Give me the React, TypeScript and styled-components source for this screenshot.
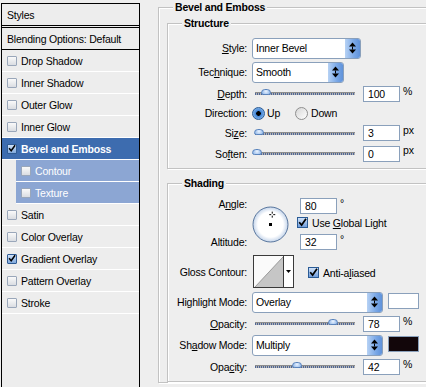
import React from 'react';
import styled, {createGlobalStyle} from 'styled-components';

type StyleItem = {
    name: string
    checked?: boolean
    selected?: boolean
    child?: boolean
}

const styleItems: StyleItem[] = [
    {name: 'Drop Shadow'},
    {name: 'Inner Shadow'},
    {name: 'Outer Glow'},
    {name: 'Inner Glow'},
    {name: 'Bevel and Emboss', checked: true, selected: true},
    {name: 'Contour', child: true},
    {name: 'Texture', child: true},
    {name: 'Satin'},
    {name: 'Color Overlay'},
    {name: 'Gradient Overlay', checked: true},
    {name: 'Pattern Overlay'},
    {name: 'Stroke'},
]

const GlobalStyle = createGlobalStyle`
  body {
    margin: 0;
    background: #eeeeee;
  }
  * {
    box-sizing: border-box;
  }
`

const CheckMark = () => (
    <svg width="9" height="9" viewBox="0 0 9 9">
        <path d="M1.2 4.2 L3.6 7 L8 0.8" fill="none" stroke="#000" strokeWidth="1.7"/>
    </svg>
)

const SpinArrows = () => (
    <svg width="7" height="12" viewBox="0 0 7 12">
        <polygon points="3.5,0.5 7,4.5 0,4.5" fill="#000"/>
        <rect x="3" y="4.5" width="1" height="3" fill="#000"/>
        <polygon points="0,7.5 7,7.5 3.5,11.5" fill="#000"/>
    </svg>
)

// angle dial, crosshair sits at 80 degrees
const AngleDial = ({angle}: {angle: number}) => {
    const rad = angle * Math.PI / 180
    const cx = 18.5 + 10 * Math.cos(rad)
    const cy = 18.5 - 10 * Math.sin(rad)
    return (
        <svg width="37" height="37" viewBox="0 0 37 37">
            <defs>
                <radialGradient id="dialFill" cx="50%" cy="50%" r="50%">
                    <stop offset="0.72" stopColor="#ffffff"/>
                    <stop offset="1" stopColor="#c4d4ea"/>
                </radialGradient>
            </defs>
            <circle cx="18.5" cy="18.5" r="17.5" fill="url(#dialFill)" stroke="#5a779e" strokeWidth="1"/>
            <rect x="17" y="17" width="3" height="3" fill="#000"/>
            <g stroke="#000" strokeWidth="1">
                <line x1={cx - 3} y1={cy} x2={cx - 1} y2={cy}/>
                <line x1={cx + 1} y1={cy} x2={cx + 3} y2={cy}/>
                <line x1={cx} y1={cy - 3} x2={cx} y2={cy - 1}/>
                <line x1={cx} y1={cy + 1} x2={cx} y2={cy + 3}/>
            </g>
        </svg>
    )
}

export default function App() {
    return (
        <>
            <GlobalStyle/>
            <Dialog>
                <StylesList>
                    <ListHeader>Styles</ListHeader>
                    <ListBlending>Blending Options: Default</ListBlending>
                    {styleItems.map(item => (
                        <ListRow key={item.name} $selected={item.selected} $child={item.child}>
                            <ListCheck $checked={item.checked}>{item.checked && <CheckMark/>}</ListCheck>
                            {item.name}
                        </ListRow>
                    ))}
                </StylesList>

                <Settings>
                    <Group $width={300} $padLeft={8}>
                        <Legend $indent={6}>Bevel and Emboss</Legend>

                        <Group $width={290} $padLeft={0}>
                            <Legend $indent={14}>Structure</Legend>
                            <Form $top={4} $bottom={4}>
                                <Label><U>S</U>tyle:</Label>
                                <Control $h={24}>
                                    <Select $w={109}><SelectText>Inner Bevel</SelectText><Spin><SpinArrows/></Spin></Select>
                                </Control>

                                <Label>Tec<U>h</U>nique:</Label>
                                <Control $h={24}>
                                    <Select $w={92}><SelectText>Smooth</SelectText><Spin><SpinArrows/></Spin></Select>
                                </Control>

                                <Label><U>D</U>epth:</Label>
                                <Control $h={19}>
                                    <Track><Thumb style={{left: 11}}/></Track>
                                    <ValueBox>100</ValueBox>
                                    <Unit>%</Unit>
                                </Control>

                                <Label>Direction:</Label>
                                <Control $h={20}>
                                    <Radio $checked/>
                                    <RadioText>Up</RadioText>
                                    <Radio $gap={15}/>
                                    <RadioText $gap={3}>Down</RadioText>
                                </Control>

                                <Label>Si<U>z</U>e:</Label>
                                <Control $h={20}>
                                    <Track><Thumb style={{left: 4}}/></Track>
                                    <ValueBox>3</ValueBox>
                                    <Unit>px</Unit>
                                </Control>

                                <Label>So<U>f</U>ten:</Label>
                                <Control $h={21}>
                                    <Track><Thumb style={{left: 2}}/></Track>
                                    <ValueBox>0</ValueBox>
                                    <Unit>px</Unit>
                                </Control>
                            </Form>
                        </Group>

                        <Group $width={290} $padLeft={0} $gapTop={7}>
                            <Legend $indent={14}>Shading</Legend>
                            <Form $top={4} $bottom={5}>
                                <StackedLabels>
                                    <span>A<U>n</U>gle:</span>
                                    <span>Altitude:</span>
                                </StackedLabels>
                                <Control $h={57}>
                                    <AngleDial angle={80}/>
                                    <AngleColumn>
                                        <AngleLine>
                                            <SmallBox>80</SmallBox>
                                            <Degree>°</Degree>
                                        </AngleLine>
                                        <CheckLine>
                                            <Check><CheckMark/></Check>
                                            <span>Use <U>G</U>lobal Light</span>
                                        </CheckLine>
                                        <AngleLine $gap={5}>
                                            <SmallBox>32</SmallBox>
                                            <Degree>°</Degree>
                                        </AngleLine>
                                    </AngleColumn>
                                </Control>

                                <Label>Gloss Contour:</Label>
                                <Control $h={37}>
                                    <ContourPicker>
                                        <svg width="29" height="31" viewBox="0 0 29 31">
                                            <rect x="0" y="0" width="29" height="31" fill="#fafafa"/>
                                            <polygon points="1,31 29,1 29,31" fill="#c6c6c6"/>
                                            <line x1="1" y1="31" x2="29" y2="1" stroke="#9a9a9a" strokeWidth="1"/>
                                        </svg>
                                        <ContourDrop>
                                            <svg width="5" height="3" viewBox="0 0 5 3">
                                                <polygon points="0,0 5,0 2.5,3" fill="#000"/>
                                            </svg>
                                        </ContourDrop>
                                    </ContourPicker>
                                    <CheckLine $indent={14}>
                                        <Check><CheckMark/></Check>
                                        <span>Anti-a<U>l</U>iased</span>
                                    </CheckLine>
                                </Control>

                                <Label>Highlight Mode:</Label>
                                <Control $h={24}>
                                    <Select $w={131}><SelectText>Overlay</SelectText><Spin><SpinArrows/></Spin></Select>
                                    <Swatch $color="#ffffff"/>
                                </Control>

                                <Label><U>O</U>pacity:</Label>
                                <Control $h={19}>
                                    <Track><Thumb style={{left: 78}}/></Track>
                                    <ValueBox>78</ValueBox>
                                    <Unit>%</Unit>
                                </Control>

                                <Label>Sh<U>a</U>dow Mode:</Label>
                                <Control $h={24}>
                                    <Select $w={131}><SelectText>Multiply</SelectText><Spin><SpinArrows/></Spin></Select>
                                    <Swatch $color="#12060a"/>
                                </Control>

                                <Label>Opa<U>c</U>ity:</Label>
                                <Control $h={19}>
                                    <Track><Thumb style={{left: 42}}/></Track>
                                    <ValueBox>42</ValueBox>
                                    <Unit>%</Unit>
                                </Control>
                            </Form>
                        </Group>
                    </Group>
                </Settings>
            </Dialog>
        </>
    )
}

const Dialog = styled.div`
  display: flex;
  width: 426px;
  height: 387px;
  overflow: hidden;
  background: #eeeeee;
  font-family: "Liberation Sans", Arial, sans-serif;
  font-size: 10.5px;
  letter-spacing: -0.2px;
  color: #000;
`

/* left column: list of layer styles */
const StylesList = styled.div`
  flex: 0 0 139px;
  margin: 3px 0 0 1px;
  border: 1px solid #000;
  border-bottom: none;
  background: #ededed;
`
const ListHeader = styled.div`
  height: 24px;
  padding-left: 5px;
  display: flex;
  align-items: center;
  border-bottom: 3px double #000;
`
const ListBlending = styled.div`
  height: 22px;
  padding-left: 5px;
  display: flex;
  align-items: center;
  border-bottom: 1px solid #000;
`
const ListRow = styled.div<{$selected?: boolean, $child?: boolean}>`
  display: flex;
  align-items: center;
  gap: 4px;
  height: 22px;
  padding-left: 5px;
  margin-left: ${props => props.$child ? '14px' : '0'};
  border-bottom: 1px solid #ffffff;
  background: ${props => {
    if (props.$selected) {
      return '#3d6caf'
    } else if (props.$child) {
      return '#8ca6d3'
    }
    return 'transparent'
  }};
  color: ${props => props.$selected || props.$child ? '#ffffff' : '#000000'};
  font-weight: ${props => props.$selected ? 'bold' : 'normal'};
`
const ListCheck = styled.span<{$checked?: boolean}>`
  width: 10px;
  height: 10px;
  flex: 0 0 10px;
  display: flex;
  align-items: center;
  justify-content: center;
  border: 1px solid ${props => props.$checked ? '#2f5b94' : '#9aa7ba'};
  border-radius: 1px;
  background: ${props => props.$checked
    ? 'linear-gradient(#cfe1f8, #7fa8dc)'
    : 'linear-gradient(#fafafa, #dadde2)'};
`

/* right column: settings */
const Settings = styled.div`
  flex: 0 0 auto;
  padding-left: 18px;
`
const Group = styled.fieldset<{$width: number, $padLeft: number, $gapTop?: number}>`
  width: ${props => props.$width}px;
  min-width: 0;
  margin: ${props => props.$gapTop || 0}px 0 0 0;
  padding: 2px 0 0 ${props => props.$padLeft}px;
  border: 1px solid #c2c2c2;
  box-shadow: inset 1px 1px 0 #ffffff, 1px 1px 0 #ffffff;
`
const Legend = styled.legend<{$indent: number}>`
  margin-left: ${props => props.$indent}px;
  padding: 0 2px;
  line-height: 14px;
  font-weight: bold;
  background: #eeeeee;
`
const Form = styled.div<{$top: number, $bottom: number}>`
  display: grid;
  grid-template-columns: 79px 1fr;
  column-gap: 5px;
  align-items: center;
  padding: ${props => props.$top}px 0 ${props => props.$bottom}px;
`
const Label = styled.div`
  text-align: right;
  white-space: nowrap;
`
const StackedLabels = styled.div`
  align-self: stretch;
  display: flex;
  flex-direction: column;
  justify-content: space-between;
  align-items: flex-end;
  padding: 2px 0 5px;
  line-height: 12px;
  white-space: nowrap;
`
const U = styled.span`
  text-decoration: underline;
`
const Control = styled.div<{$h: number}>`
  display: flex;
  align-items: center;
  height: ${props => props.$h}px;
  white-space: nowrap;
`
const Select = styled.div<{$w: number}>`
  width: ${props => props.$w}px;
  height: 21px;
  display: flex;
  align-items: center;
  padding-left: 3px;
  border: 1px solid #8aa0bb;
  border-radius: 3px;
  background: #ffffff;
`
const SelectText = styled.span`
  flex: 1;
`
const Spin = styled.span`
  width: 15px;
  height: 19px;
  display: flex;
  align-items: center;
  justify-content: center;
  border-radius: 0 2px 2px 0;
  background: linear-gradient(90deg, #b7d2f4, #79a7e6 60%, #5f92da);
`
const Track = styled.div`
  position: relative;
  width: 100px;
  height: 3px;
  margin-left: 3px;
  border-top: 1px solid #8d8d8d;
  background: repeating-linear-gradient(90deg, #4f6696 0 1px, #b4b4b4 1px 2px);
`
const Thumb = styled.span`
  position: absolute;
  top: -4px;
  width: 10px;
  height: 6px;
  margin-left: -5px;
  border: 1px solid #5a84bd;
  border-radius: 5px 5px 3px 3px;
  background: radial-gradient(circle at 50% 35%, #eaf3ff, #86b0e6);
`
const ValueBox = styled.div`
  width: 37px;
  height: 16px;
  margin-left: 8px;
  padding-left: 4px;
  line-height: 14px;
  border: 1px solid #8aa0bb;
  background: #ffffff;
`
const Unit = styled.span`
  margin-left: 3px;
  align-self: flex-start;
  margin-top: 1px;
`
const Radio = styled.span<{$checked?: boolean, $gap?: number}>`
  width: 13px;
  height: 13px;
  margin-left: ${props => props.$gap || 0}px;
  border-radius: 50%;
  border: 1px solid ${props => props.$checked ? '#2a5b95' : '#8e8e8e'};
  background: ${props => props.$checked
    ? 'radial-gradient(circle, #000 0 2px, #3f84d6 2.6px, #a9cdf3 100%)'
    : 'linear-gradient(135deg, #d6d6d6, #ffffff)'};
`
const RadioText = styled.span<{$gap?: number}>`
  margin-left: ${props => props.$gap || 2}px;
`
const AngleColumn = styled.div`
  align-self: flex-start;
  display: flex;
  flex-direction: column;
  margin-left: 8px;
  padding-top: 2px;
`
const AngleLine = styled.div<{$gap?: number}>`
  display: flex;
  margin-top: ${props => props.$gap || 0}px;
`
const SmallBox = styled(ValueBox)`
  margin-left: 3px;
`
const Degree = styled.span`
  margin-left: 3px;
  line-height: 10px;
`
const CheckLine = styled.div<{$indent?: number}>`
  display: flex;
  align-items: center;
  gap: 4px;
  height: 13px;
  margin: 2px 0 0 ${props => props.$indent || 0}px;
`
const Check = styled.span`
  width: 11px;
  height: 11px;
  display: flex;
  align-items: center;
  justify-content: center;
  border: 1px solid #2a5b95;
  background: linear-gradient(#cfe1f8, #6f9ddc);
`
const ContourPicker = styled.div`
  display: flex;
  height: 33px;
  margin-left: 1px;
  border: 1px solid #3a3a3a;
  background: #ffffff;
`
const ContourDrop = styled.div`
  width: 10px;
  display: flex;
  align-items: center;
  justify-content: center;
  border-left: 1px solid #3a3a3a;
`
const Swatch = styled.div<{$color: string}>`
  width: 31px;
  height: 16px;
  margin-left: 5px;
  align-self: flex-start;
  margin-top: 3px;
  border: 1px solid #8aa0bb;
  background: ${props => props.$color};
`
